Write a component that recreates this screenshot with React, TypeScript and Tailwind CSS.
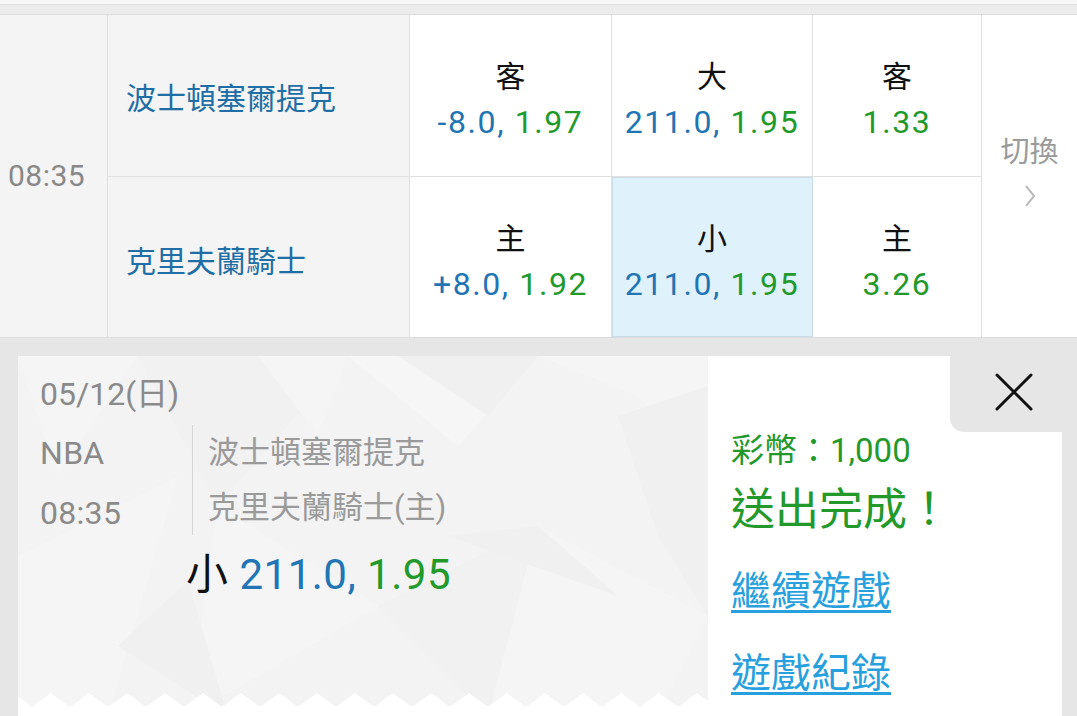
import React from "react";

const FONT = { fontFamily: 'Roboto, "Noto Sans CJK TC", sans-serif' };

function OddsCell({
  label,
  line,
  odd,
  selected,
  borderB,
}: {
  label: string;
  line?: string;
  odd: string;
  selected?: boolean;
  borderB?: boolean;
}) {
  return (
    <div
      className={
        "flex flex-col items-center justify-center border-r border-[#e0e0e0] pt-[8px] " +
        (borderB ? "border-b " : "") +
        (selected ? "bg-[#dff1fb] outline outline-1 outline-[#c9dde9] -outline-offset-1" : "bg-white")
      }
    >
      <div className="text-[30px] leading-[36px] text-[#111] pb-[9px]">{label}</div>
      <div className="text-[32px] leading-[36px] tracking-[1.6px]">
        {line ? <span className="text-[#2175b4]">{line}, </span> : null}
        <span className="text-[#22992b]">{odd}</span>
      </div>
    </div>
  );
}

function Pattern() {
  return (
    <svg
      className="absolute inset-0 w-full h-full"
      viewBox="0 0 690 361"
      preserveAspectRatio="none"
    >
      <rect width="690" height="361" fill="#f3f3f3" />
      <polygon points="0,0 120,0 40,120" fill="#f5f5f5" />
      <polygon points="120,0 330,0 200,150" fill="#f1f1f1" />
      <polygon points="330,0 520,0 440,90" fill="#f6f6f6" />
      <polygon points="380,0 520,0 470,60" fill="#f0f0f0" />
      <polygon points="520,0 690,0 690,120 620,40" fill="#f5f5f5" />
      <polygon points="600,60 690,30 690,260 640,180" fill="#f0f0f0" />
      <polygon points="0,200 160,120 90,361 0,361" fill="#f5f5f5" />
      <polygon points="200,150 360,250 170,361" fill="#f5f5f5" />
      <polygon points="100,290 170,225 210,361" fill="#f0f0f0" />
      <polygon points="360,250 520,170 470,361" fill="#f1f1f1" />
      <polygon points="520,170 690,260 640,361 470,361" fill="#f5f5f5" />
      <polygon points="430,180 600,240 520,170" fill="#f0f0f0" />
      <polygon points="240,0 330,0 300,80" fill="#f5f5f5" />
    </svg>
  );
}

function Zigzag() {
  const teeth = [];
  const w = 38;
  for (let i = -1; i < 22; i++) {
    const x = 14 + i * w;
    teeth.push(`${x},16 ${x + w / 2},2 ${x + w},16`);
  }
  return (
    <svg className="absolute left-0 bottom-0 w-full h-[26px]" viewBox="0 0 690 26" preserveAspectRatio="none">
      {teeth.map((p, i) => (
        <polygon key={i} points={p} fill="#ffffff" />
      ))}
      <rect x="0" y="15" width="690" height="11" fill="#ffffff" />
    </svg>
  );
}

export default function App() {
  return (
    <div className="w-[1077px] h-[716px] overflow-hidden bg-[#e6e6e6] relative" style={FONT}>
      {/* top strip */}
      <div className="h-[5px] bg-[#f6f6f6] border-b border-[#dedede]" />
      <div className="h-[10px] bg-[#ececec] border-b border-[#dcdcdc]" />

      {/* match rows */}
      <div className="grid grid-cols-[108px_302px_202px_201px_169px_95px] grid-rows-[162px_160px] border-b border-[#dddddd]">
        <div className="row-span-2 bg-[#f4f4f4] border-r border-[#dedede] flex items-center pl-[8px] pb-[2px] text-[30px] tracking-[0.5px] text-[#888]">
          08:35
        </div>
        <div className="bg-[#f4f4f4] border-r border-b border-[#e0e0e0] flex items-center pl-[18px] pt-[6px] text-[30px] text-[#1f6ea5]">
          波士頓塞爾提克
        </div>
        <OddsCell label="客" line="-8.0" odd="1.97" borderB />
        <OddsCell label="大" line="211.0" odd="1.95" borderB />
        <OddsCell label="客" odd="1.33" borderB />
        <div className="row-span-2 bg-white flex flex-col items-center justify-center pb-[8px]">
          <div className="text-[29px] leading-[34px] text-[#9a9a9a]">切換</div>
          <svg width="14" height="26" viewBox="0 0 14 26" className="mt-[14px]">
            <path d="M3 3 L11 13 L3 23" stroke="#b5b5b5" strokeWidth="2" fill="none" />
          </svg>
        </div>
        <div className="bg-[#f4f4f4] border-r border-[#e0e0e0] flex items-center pl-[18px] pt-[8px] text-[30px] text-[#1f6ea5]">
          克里夫蘭騎士
        </div>
        <OddsCell label="主" line="+8.0" odd="1.92" />
        <OddsCell label="小" line="211.0" odd="1.95" selected />
        <OddsCell label="主" odd="3.26" />
      </div>

      {/* ticket card */}
      <div className="mt-[18px] ml-[18px] w-[1044px] h-[400px] flex">
        <div className="relative w-[690px] h-[361px] bg-[#f3f3f3] overflow-hidden">
          <Pattern />
          <Zigzag />
          <div className="relative pl-[22px] pt-[18px] text-[#8a8a8a]">
            <div className="text-[32px] leading-[40px]">05/12(日)</div>
            <div className="flex mt-[11px]">
              <div className="w-[153px] border-r border-[#d6d6d6] flex flex-col text-[32px] tracking-[0.3px]">
                <div className="h-[60px] leading-[56px]">NBA</div>
                <div className="h-[50px] leading-[56px]">08:35</div>
              </div>
              <div className="pl-[15px] flex flex-col text-[31px] text-[#9a9a9a]">
                <div className="h-[58px] leading-[56px]">波士頓塞爾提克</div>
                <div className="h-[52px] leading-[50px]">克里夫蘭騎士(主)</div>
              </div>
            </div>
            <div className="pl-[146px] mt-[15px] text-[42px] leading-[50px] tracking-[0.5px]">
              <span className="text-[#111]">小 </span>
              <span className="text-[#2175b4]">211.0, </span>
              <span className="text-[#22992b]">1.95</span>
            </div>
          </div>
        </div>
        <div className="flex-1 bg-white pl-[23px] pt-[74px]">
          <div className="text-[33px] leading-[42px] text-[#23992b]">彩幣：1,000</div>
          <div className="text-[44px] leading-[54px] text-[#23992b] mt-[11px]">送出完成！</div>
          <div className="mt-[30px] text-[40px] leading-[50px] text-[#27a0dd] underline decoration-[3px] underline-offset-[5px]">
            繼續遊戲
          </div>
          <div className="mt-[32px] text-[40px] leading-[50px] text-[#27a0dd] underline decoration-[3px] underline-offset-[5px]">
            遊戲紀錄
          </div>
        </div>
      </div>

      {/* close tab */}
      <div className="absolute left-[950px] top-[338px] w-[127px] h-[94px] bg-[#e6e6e6] rounded-bl-[14px] flex items-center justify-center pt-[14px]">
        <svg width="40" height="40" viewBox="0 0 40 40">
          <path d="M3 3 L37 37 M37 3 L3 37" stroke="#111" strokeWidth="3" strokeLinecap="round" />
        </svg>
      </div>
    </div>
  );
}
